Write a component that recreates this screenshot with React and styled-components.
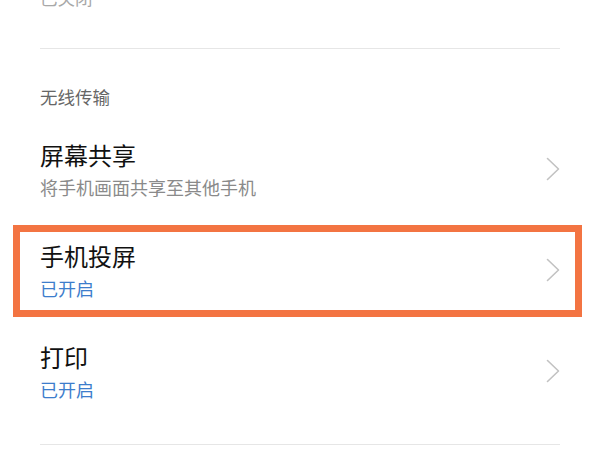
import React from 'react';
import styled, { createGlobalStyle } from 'styled-components';

const GlobalStyle = createGlobalStyle`
    html, body {
        margin: 0;
        padding: 0;
        background: #ffffff;
    }
    body {
        font-family: "Noto Sans CJK SC", "Noto Sans", sans-serif;
        overflow: hidden;
    }
`;

const Page = styled.div`
    width: 600px;
    height: 450px;
    overflow: hidden;
    box-sizing: border-box;
    padding: 0 40px;
`;

const Stub = styled.div`
    margin-top: -14px;
    font-size: 17.5px;
    line-height: 24px;
    color: #a8a8a8;
`;

const Divider = styled.div`
    height: 1px;
    background: #e6e6e6;
    margin-top: ${p => p.$gap}px;
`;

const SectionTitle = styled.div`
    margin-top: 36px;
    margin-bottom: 10px;
    font-size: 17.5px;
    line-height: 24px;
    color: #666666;
`;

const Row = styled.div`
    position: relative;
    display: flex;
    align-items: center;
    justify-content: space-between;
    padding: 20px 0 21px;

    ${p => p.$highlight && `
        &::after {
            content: '';
            position: absolute;
            top: 5px;
            bottom: 4px;
            left: -27px;
            right: -22px;
            border: 7px solid #f37442;
            pointer-events: none;
        }
    `}
`;

const Texts = styled.div`
    display: flex;
    flex-direction: column;
`;

const Title = styled.div`
    font-size: 24px;
    line-height: 32px;
    color: #111111;
`;

const Subtitle = styled.div`
    margin-top: 4px;
    font-size: 18px;
    line-height: 24px;
    color: ${p => (p.$on ? '#3d7dcc' : '#8a8a8a')};
`;

const Chevron = () => (
    <svg width="14" height="24" viewBox="0 0 14 24">
        <path d="M1.5 1.5 L12.5 12 L1.5 22.5" fill="none" stroke="#c2c2c2" strokeWidth="1.6" strokeLinecap="round" strokeLinejoin="round" />
    </svg>
);

const items = [
    { title: '屏幕共享', sub: '将手机画面共享至其他手机', on: false },
    { title: '手机投屏', sub: '已开启', on: true, highlight: true },
    { title: '打印', sub: '已开启', on: true },
];

export default () => {
    return (
        <Page>
            <GlobalStyle />
            <Stub>已关闭</Stub>
            <Divider $gap={38} />
            <SectionTitle>无线传输</SectionTitle>
            {items.map(item => (
                <Row key={item.title} $highlight={item.highlight}>
                    <Texts>
                        <Title>{item.title}</Title>
                        <Subtitle $on={item.on}>{item.sub}</Subtitle>
                    </Texts>
                    <Chevron />
                </Row>
            ))}
            <Divider $gap={22} />
        </Page>
    );
};
